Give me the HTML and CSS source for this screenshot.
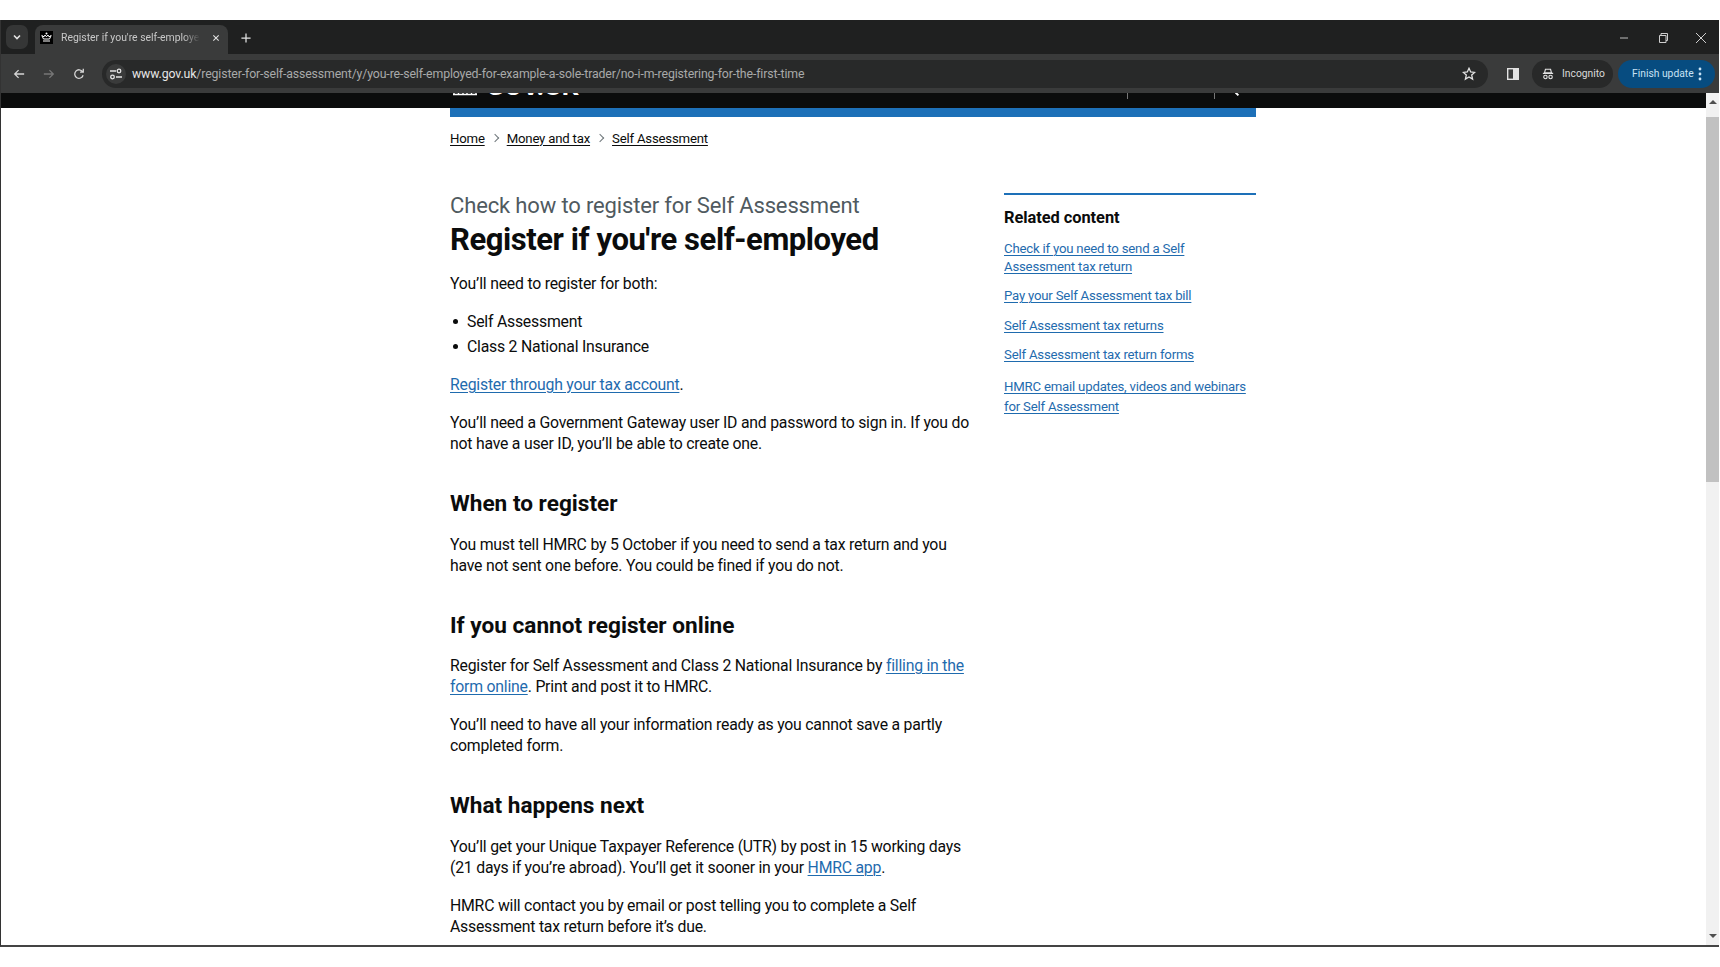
FILE: index.html
```html
<!DOCTYPE html>
<html lang="en">
<head>
    <meta charset="UTF-8">
    <title>Register if you're self-employed</title>
    <link rel="stylesheet" href="styles.css">
</head>
<body>
    <div id="browser">
        <!-- Tab strip -->
        <div id="tab-strip">
            <div class="tab-search">
                <svg width="12" height="12" viewBox="0 0 12 12"><path d="M3 4.500l3 3 3-3" fill="none" stroke="#e3e3e3" stroke-width="1.600"/></svg>
            </div>
            <div class="tab">
                <div class="favicon">
                    <svg width="13" height="13" viewBox="0 0 13 13"><circle cx="6.500" cy="2.500" r="1" fill="#fff"/><path d="M1.800 4.500l1.700 3.500h6l1.700-3.500-2.200 1.300-1-1.800-1.500 1.800-1.500-1.800-1 1.800zM3 10h7" fill="none" stroke="#fff" stroke-width="1"/></svg>
                </div>
                <span class="tab-title">Register if you're self-employed</span>
                <svg class="tab-close" width="12" height="12" viewBox="0 0 12 12"><path d="M2 2l8 8M10 2l-8 8" stroke="#e3e3e3" stroke-width="1.600"/></svg>
            </div>
            <svg class="new-tab" width="12" height="12" viewBox="0 0 12 12"><path d="M6 0.500v11M0.500 6h11" stroke="#e3e3e3" stroke-width="1.500"/></svg>
            <div class="window-btns">
                <svg width="12" height="12" viewBox="0 0 12 12"><path d="M1 6h8" stroke="#bdbdbd" stroke-width="1"/></svg>
                <svg width="12" height="12" viewBox="0 0 12 12"><path d="M2.500 3.500h6.500v7h-6.500zM4 3.500v-2h6.500v7h-1.500" fill="none" stroke="#cfcfcf" stroke-width="1"/></svg>
                <svg width="12" height="12" viewBox="0 0 12 12"><path d="M1 1l10 10M11 1l-10 10" stroke="#cfcfcf" stroke-width="1"/></svg>
            </div>
        </div>

        <!-- Address bar row -->
        <div id="toolbar">
            <svg class="nav-btn" width="14" height="14" viewBox="0 0 14 14"><path d="M13 7h-11M6.500 2.500l-4.500 4.500 4.500 4.500" fill="none" stroke="#d6d6d6" stroke-width="1.500"/></svg>
            <svg class="nav-btn" width="14" height="14" viewBox="0 0 14 14"><path d="M1 7h11M7.500 2.500l4.500 4.500-4.500 4.500" fill="none" stroke="#777" stroke-width="1.500"/></svg>
            <svg class="nav-btn" width="14" height="14" viewBox="0 0 14 14"><path d="M11.800 8.500a5 5 0 1 1-.6-4.200M12 1v3.800h-3.800" fill="none" stroke="#d6d6d6" stroke-width="1.500"/></svg>
            <div id="omnibox">
                <div class="site-info">
                    <svg width="14" height="12" viewBox="0 0 14 12"><path d="M1 3h6M7 9h6" stroke="#e3e3e3" stroke-width="1.500"/><circle cx="10" cy="3" r="1.800" fill="none" stroke="#e3e3e3" stroke-width="1.300"/><circle cx="3.500" cy="9" r="1.800" fill="none" stroke="#e3e3e3" stroke-width="1.300"/></svg>
                </div>
                <div class="url"><span class="host">www.gov.uk</span>/register-for-self-assessment/y/you-re-self-employed-for-example-a-sole-trader/no-i-m-registering-for-the-first-time</div>
                <svg class="star" width="14" height="14" viewBox="0 0 14 14"><path d="M7 1.300l1.700 3.700 4 .4-3 2.700.9 4-3.600-2.100-3.600 2.100.9-4-3-2.700 4-.4z" fill="none" stroke="#e3e3e3" stroke-width="1.300"/></svg>
            </div>
            <svg class="side-panel" width="12" height="12" viewBox="0 0 12 12"><rect x="0.700" y="0.700" width="10.600" height="10.600" fill="none" stroke="#e3e3e3" stroke-width="1.400"/><rect x="6" y="1" width="5" height="10" fill="#e3e3e3"/></svg>
            <div class="incognito">
                <svg width="12" height="14" viewBox="0 0 14 14"><path d="M4 1.500h6l1 4h-8zM1 6.300h12" fill="none" stroke="#e3e3e3" stroke-width="1.300"/><circle cx="4" cy="10.500" r="2" fill="none" stroke="#e3e3e3" stroke-width="1.300"/><circle cx="10" cy="10.500" r="2" fill="none" stroke="#e3e3e3" stroke-width="1.300"/></svg>
                <span>Incognito</span>
            </div>
            <div class="finish-update">
                <span>Finish update</span>
                <svg width="4" height="14" viewBox="0 0 4 14"><circle cx="2" cy="2" r="1.400" fill="#c8e2f5"/><circle cx="2" cy="7" r="1.400" fill="#c8e2f5"/><circle cx="2" cy="12" r="1.400" fill="#c8e2f5"/></svg>
            </div>
        </div>

        <div id="viewport">
            <div id="page">
                <!-- Masthead, mostly scrolled out of view -->
                <div class="masthead">
                    <div class="masthead-inner">
                        <svg class="crown" width="26" height="20" viewBox="0 0 26 20"><path d="M1 17.500h24M2 12v5.500M6.500 12v5.500M11 12v5.500M15 12v5.500M19.500 12v5.500M24 12v5.500" fill="none" stroke="#fff" stroke-width="1.400"/></svg>
                        <span class="logotype">GOV.UK</span>
                        <span class="sep sep-one"></span>
                        <span class="sep sep-two"></span>
                        <span class="search-tip"></span>
                    </div>
                </div>

                <div class="width-container">
                    <div class="blue-bar"></div>

                    <div class="breadcrumbs">
                        <a href="#">Home</a>
                        <span class="chevron"></span>
                        <a href="#">Money and tax</a>
                        <span class="chevron"></span>
                        <a href="#">Self Assessment</a>
                    </div>

                    <div class="columns">
                        <div class="main-col">
                            <div class="caption">Check how to register for Self Assessment</div>
                            <h1>Register if you're self-employed</h1>

                            <p>You’ll need to register for both:</p>
                            <ul>
                                <li>Self Assessment</li>
                                <li>Class 2 National Insurance</li>
                            </ul>
                            <p><a href="#">Register through your tax account</a>.</p>
                            <p>You’ll need a Government Gateway user ID and password to sign in. If you do<br>not have a user ID, you’ll be able to create one.</p>

                            <h2>When to register</h2>
                            <p>You must tell HMRC by 5 October if you need to send a tax return and you<br>have not sent one before. You could be fined if you do not.</p>

                            <h2>If you cannot register online</h2>
                            <p>Register for Self Assessment and Class 2 National Insurance by <a href="#">filling in the<br>form online</a>. Print and post it to HMRC.</p>
                            <p>You’ll need to have all your information ready as you cannot save a partly<br>completed form.</p>

                            <h2>What happens next</h2>
                            <p>You’ll get your Unique Taxpayer Reference (UTR) by post in 15 working days<br>(21 days if you’re abroad). You’ll get it sooner in your <a href="#">HMRC app</a>.</p>
                            <p>HMRC will contact you by email or post telling you to complete a Self<br>Assessment tax return before it’s due.</p>
                        </div>

                        <div class="related">
                            <h3>Related content</h3>
                            <a href="#">Check if you need to send a Self<br>Assessment tax return</a>
                            <a href="#">Pay your Self Assessment tax bill</a>
                            <a href="#">Self Assessment tax returns</a>
                            <a href="#">Self Assessment tax return forms</a>
                            <a href="#" class="loose">HMRC email updates, videos and webinars<br>for Self Assessment</a>
                        </div>
                    </div>
                </div>
            </div>

            <div id="scrollbar">
                <div class="arrow arrow-up"></div>
                <div class="thumb"></div>
                <div class="track"></div>
                <div class="arrow arrow-down"></div>
            </div>
        </div>
    </div>
</body>
</html>
```

FILE: styles.css
```css
* {
    box-sizing: border-box;
    margin: 0;
    padding: 0;
}

html, body {
    height: 967px;
    overflow: hidden;
    background-color: #fff;
}

body {
    font-family: Roboto, sans-serif;
    padding: 20px 1px 20px 0;
}

#browser {
    height: 927px;
    display: flex;
    flex-direction: column;
    border-left: 1px solid #333;
    border-bottom: 2px solid #444;
}

/* Tab strip */
#tab-strip {
    height: 34px;
    flex-shrink: 0;
    background-color: #1f2020;
    display: flex;
    align-items: flex-end;
}

.tab-search {
    width: 22px;
    height: 24px;
    margin: 0 0 5px 5px;
    border-radius: 7px;
    background-color: #353636;
    display: flex;
    align-items: center;
    justify-content: center;
}

.tab {
    width: 193px;
    height: 29px;
    margin-left: 7px;
    border-radius: 8px 8px 0 0;
    background-color: #3a3b3b;
    display: flex;
    align-items: center;
    padding: 0 0 4px 5px;
}

.favicon {
    width: 13px;
    height: 13px;
    background-color: #000;
    flex-shrink: 0;
}

.favicon svg {
    display: block;
}

.tab-title {
    width: 139px;
    margin-left: 8px;
    font-size: 10.4px;
    color: #c9c9c9;
    white-space: nowrap;
    overflow: hidden;
    -webkit-mask-image: linear-gradient(to right, #000 88%, transparent);
    mask-image: linear-gradient(to right, #000 88%, transparent);
}

.tab-close {
    margin-left: 12px;
    width: 8px;
    height: 8px;
}

.new-tab {
    width: 10px;
    height: 10px;
    margin: 0 0 11px 13px;
}

.window-btns {
    margin-left: auto;
    margin-bottom: 10px;
    padding-right: 12px;
    display: flex;
    gap: 26px;
}

/* Toolbar */
#toolbar {
    height: 39px;
    flex-shrink: 0;
    background-color: #3a3b3b;
    display: flex;
    align-items: center;
    padding: 0 0 0 12px;
}

.nav-btn {
    margin-right: 18px;
    width: 12px;
    height: 12px;
}

.nav-btn:nth-child(3) {
    margin-right: 17px;
}

#omnibox {
    width: 1386px;
    height: 28px;
    border-radius: 14px;
    background-color: #282929;
    display: flex;
    align-items: center;
    padding: 0 4px;
    flex-shrink: 0;
}

.site-info {
    width: 20px;
    height: 20px;
    border-radius: 50%;
    background-color: #3a3b3b;
    display: flex;
    align-items: center;
    justify-content: center;
    flex-shrink: 0;
}

.url {
    margin-left: 6px;
    flex: 1;
    font-size: 12.3px;
    letter-spacing: -0.13px;
    color: #a9aaaa;
    white-space: nowrap;
}

.host {
    color: #e6e6e6;
}

.star {
    margin-right: 8px;
}

.side-panel {
    margin-left: 19px;
    flex-shrink: 0;
}

.incognito {
    width: 81px;
    height: 28px;
    margin-left: 13px;
    border-radius: 14px;
    background-color: #282929;
    display: flex;
    align-items: center;
    padding-left: 10px;
    gap: 8px;
    font-size: 10.3px;
    color: #d9d9d9;
    flex-shrink: 0;
}

.finish-update {
    width: 97px;
    height: 28px;
    margin-left: 5px;
    border-radius: 14px;
    background-color: #074c80;
    display: flex;
    align-items: center;
    padding: 0 13px 0 14px;
    justify-content: space-between;
    font-size: 10.3px;
    color: #c8e2f5;
    white-space: nowrap;
    flex-shrink: 0;
}

/* Page area */
#viewport {
    flex: 1;
    min-height: 0;
    display: flex;
    overflow: hidden;
    background-color: #fff;
}

#page {
    flex: 1;
    min-width: 0;
    overflow: hidden;
}

.masthead {
    height: 15px;
    background-color: #0b0c0c;
    overflow: hidden;
}

.masthead-inner {
    width: 806px;
    margin-left: 449px;
    display: flex;
    align-items: flex-end;
    height: 15px;
    position: relative;
}

.crown {
    width: 26px;
    height: 20px;
    flex-shrink: 0;
    margin-left: 2px;
    margin-bottom: 11px;
}

.logotype {
    margin-left: 8px;
    margin-bottom: 12px;
    font-size: 26.5px;
    line-height: 20px;
    height: 20px;
    font-weight: 700;
    color: #fff;
    flex-shrink: 0;
}

.sep {
    position: absolute;
    top: 0;
    width: 1px;
    height: 6px;
    background-color: #777;
}

.sep-one {
    left: 677px;
}

.sep-two {
    left: 764px;
}

.search-tip {
    position: absolute;
    top: 0;
    left: 785px;
    width: 4px;
    height: 2px;
    background-color: #fff;
    transform: rotate(45deg);
}

.width-container {
    width: 806px;
    margin-left: 449px;
}

.blue-bar {
    height: 9px;
    background-color: #1d70b8;
}

a {
    color: #1f6bae;
    text-decoration: underline;
    text-decoration-thickness: 1px;
    text-underline-offset: 2px;
}

/* Breadcrumbs */
.breadcrumbs {
    height: 24px;
    margin-top: 9px;
    display: flex;
    align-items: center;
    font-size: 13.2px;
    letter-spacing: -0.2px;
}

.breadcrumbs a {
    color: #0b0c0c;
}

.chevron {
    width: 6px;
    height: 6px;
    margin: 0 9px 0 7px;
    border-top: 1px solid #6f777b;
    border-right: 1px solid #6f777b;
    transform: rotate(45deg);
}

.columns {
    display: flex;
    margin-top: 40px;
}

.main-col {
    width: 554px;
    flex-shrink: 0;
    font-size: 15.8px;
    letter-spacing: -0.22px;
    line-height: 21px;
    color: #0b0c0c;
    white-space: nowrap;
}

.caption {
    font-size: 22px;
    letter-spacing: -0.15px;
    line-height: 30px;
    margin-top: 1px;
    color: #505a5f;
}

h1 {
    font-size: 31px;
    letter-spacing: -0.44px;
    line-height: 36px;
    font-weight: 700;
    margin-top: 1px;
    margin-bottom: 15px;
}

.main-col p {
    margin-bottom: 17px;
}

ul {
    list-style: none;
    margin-bottom: 17px;
}

li {
    position: relative;
    padding-left: 17px;
    margin-bottom: 4px;
}

li::before {
    content: "";
    position: absolute;
    left: 3px;
    top: 8px;
    width: 5px;
    height: 5px;
    border-radius: 50%;
    background-color: #0b0c0c;
}

h2 {
    font-size: 22.6px;
    letter-spacing: 0;
    line-height: 28px;
    font-weight: 700;
    margin: 36px 0 15.5px;
}

/* Related content */
.related {
    width: 252px;
    height: 260px;
    margin-top: 3px;
    border-top: 2px solid #1d70b8;
    font-size: 13.2px;
    letter-spacing: -0.2px;
    line-height: 17.5px;
    white-space: nowrap;
    display: flex;
    flex-direction: column;
    align-items: flex-start;
}

.related h3 {
    margin-top: 13px;
    font-size: 16.4px;
    letter-spacing: -0.05px;
    line-height: 20px;
    font-weight: 700;
    color: #0b0c0c;
}

.related a {
    margin-top: 12px;
}

.related h3 + a {
    margin-top: 12px;
}

.related a.loose {
    margin-top: 13px;
    line-height: 20px;
}

/* Scrollbar */
#scrollbar {
    width: 13px;
    flex-shrink: 0;
    background-color: #f1f1f1;
    display: flex;
    flex-direction: column;
}

.arrow {
    height: 24px;
    flex-shrink: 0;
    position: relative;
}

.arrow-down {
    height: 17px;
}

.arrow::after {
    content: "";
    position: absolute;
    left: 3px;
    border-left: 4px solid transparent;
    border-right: 4px solid transparent;
}

.arrow-up::after {
    top: 7px;
    border-bottom: 4px solid #505050;
}

.arrow-down::after {
    top: 6px;
    border-top: 4px solid #505050;
}

.thumb {
    height: 365px;
    flex-shrink: 0;
    background-color: #c1c1c1;
}

.track {
    flex: 1;
}
```
